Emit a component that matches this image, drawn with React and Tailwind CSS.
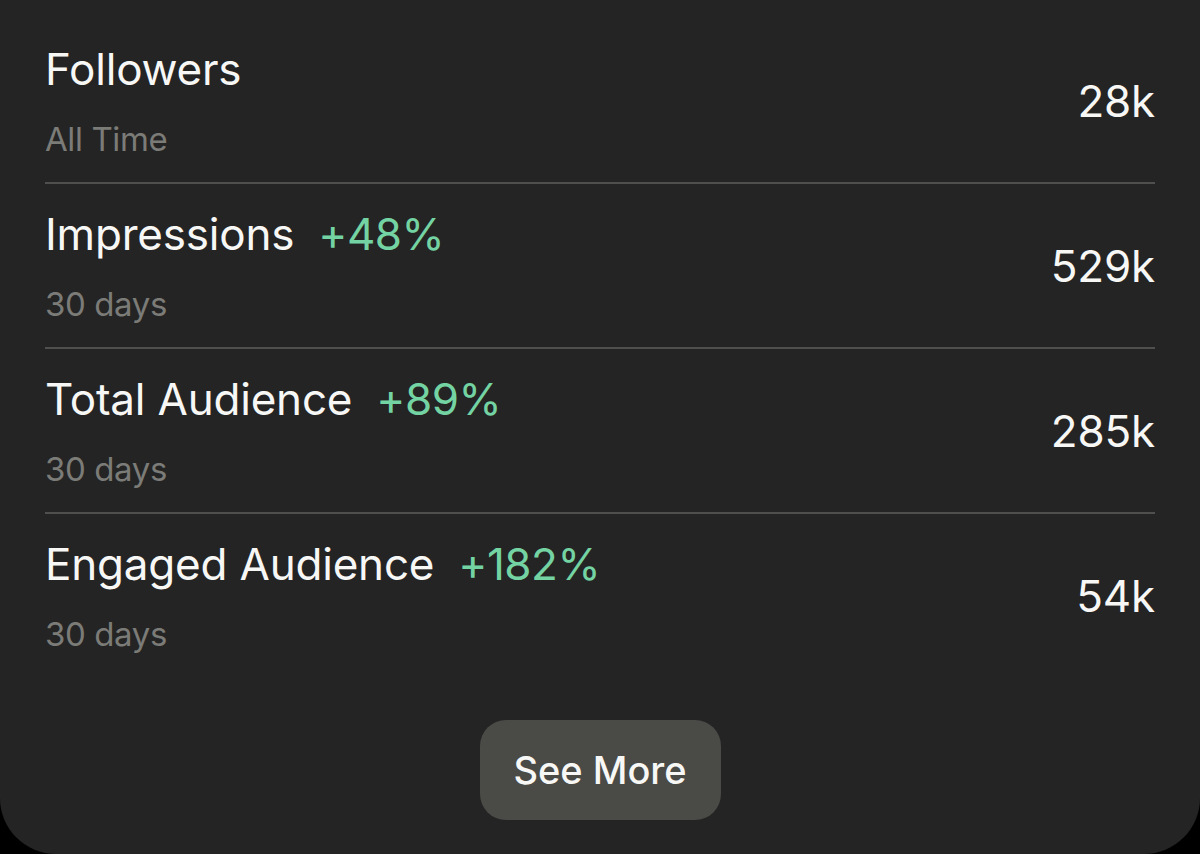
import React from "react";

const rows = [
  { title: "Followers", sub: "All Time", value: "28k" },
  { title: "Impressions", pct: "+48%", sub: "30 days", value: "529k" },
  { title: "Total Audience", pct: "+89%", sub: "30 days", value: "285k" },
  { title: "Engaged Audience", pct: "+182%", sub: "30 days", value: "54k" },
];

export default function App() {
  return (
    <div className="w-[1200px] h-[854px] bg-black overflow-hidden" style={{ fontFamily: "Inter, 'Noto Sans', sans-serif" }}>
      <div className="h-[854px] bg-[#242424] rounded-b-[56px] px-[45px] pt-[19px] flex flex-col">
        {rows.map((r, i) => (
          <div
            key={r.title}
            className={
              "flex items-center justify-between pt-[24px] pb-[23px] " +
              (i < rows.length - 1 ? "border-b-2 border-[#4f4f4d]" : "")
            }
          >
            <div className="flex flex-col gap-[24px]">
              <div className="flex items-baseline gap-[24px] text-[44px] leading-[52px] tracking-[-0.2px] text-[#f7f7f5]">
                <span>{r.title}</span>
                {r.pct && <span className="text-[#74d3a3] tracking-[-0.5px]">{r.pct}</span>}
              </div>
              <div className="text-[33px] leading-[40px] tracking-[-0.4px] text-[#7b7b77]">{r.sub}</div>
            </div>
            <div className="text-[44px] leading-[52px] tracking-[-0.2px] text-[#f7f7f5]">{r.value}</div>
          </div>
        ))}
        <div className="flex justify-center mt-[43px]">
          <button className="w-[241px] h-[100px] rounded-[26px] bg-[#4a4a46] text-[38px] font-medium text-[#f7f7f5]">
            See More
          </button>
        </div>
      </div>
    </div>
  );
}
